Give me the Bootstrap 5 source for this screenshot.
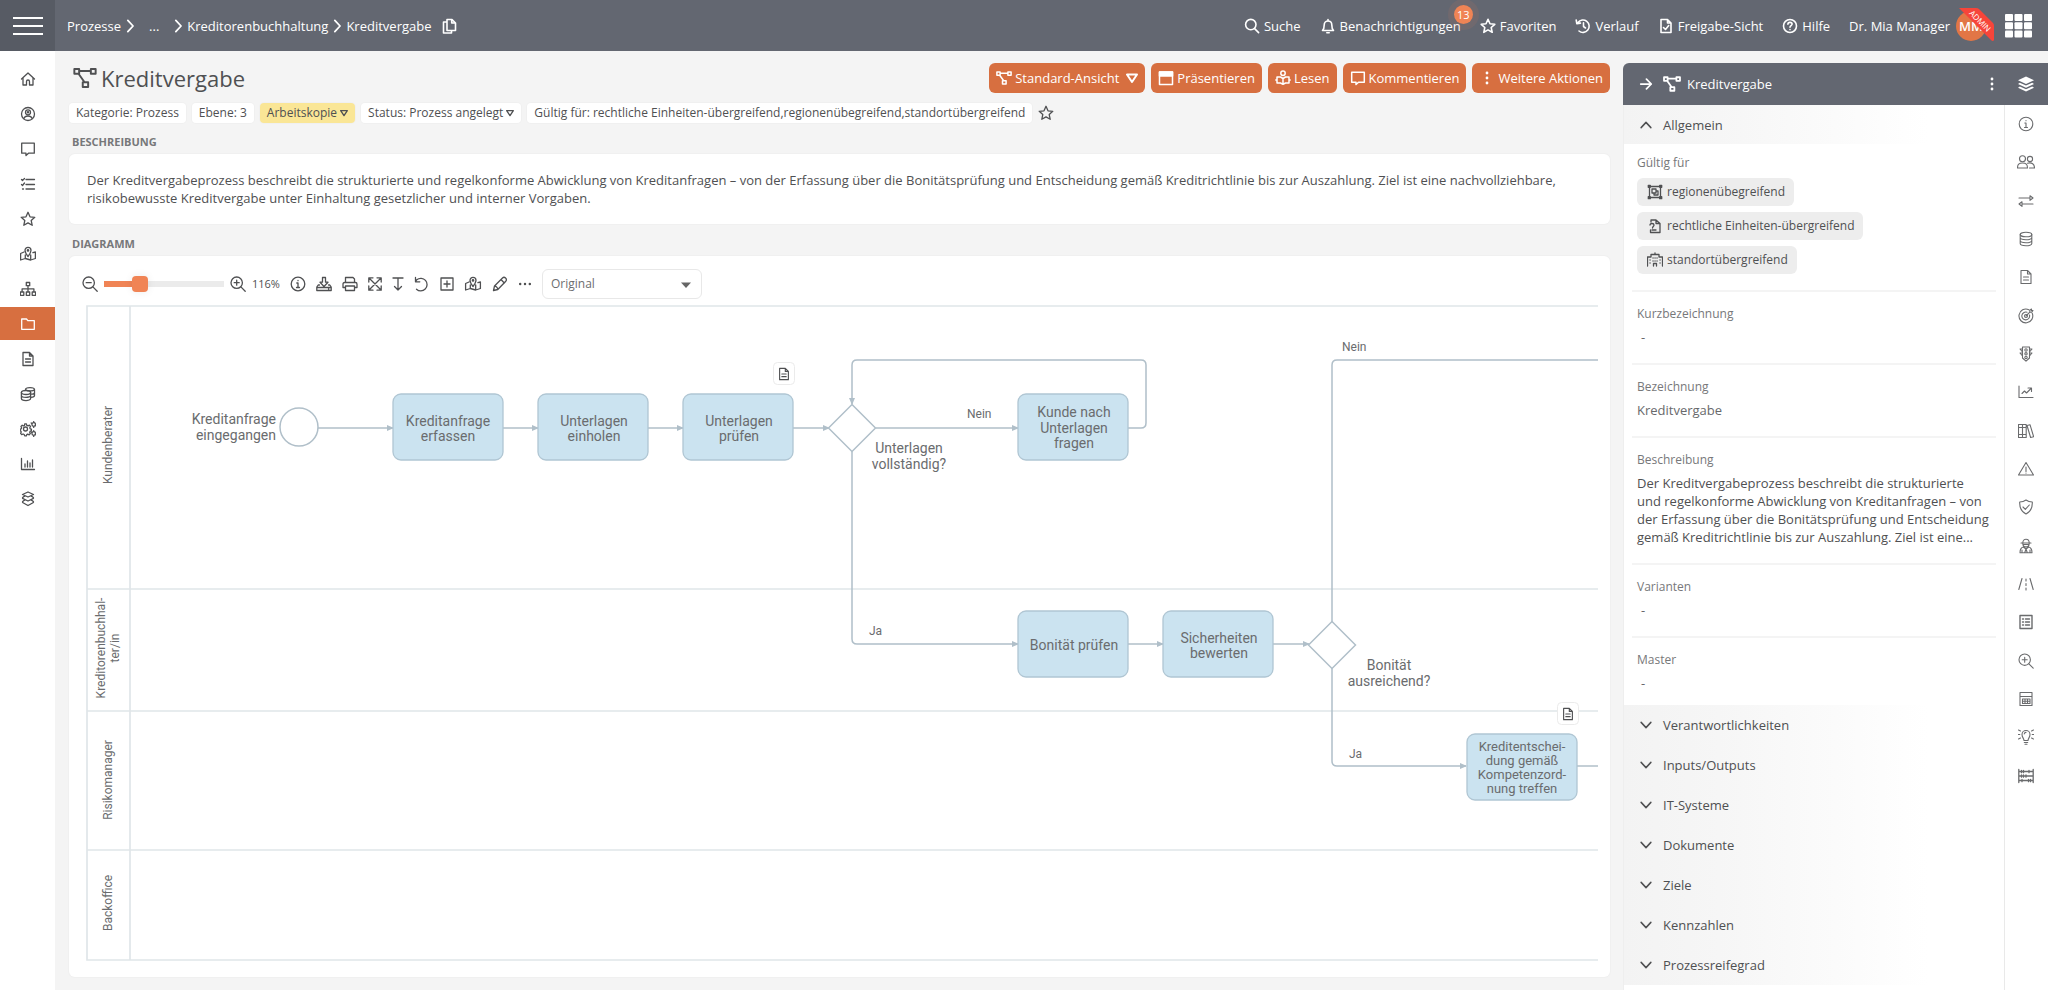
<!DOCTYPE html>
<html lang="de">
<head>
<meta charset="utf-8">
<meta name="viewport" content="width=device-width, initial-scale=1">
<title>Kreditvergabe</title>
<link href="https://cdn.jsdelivr.net/npm/bootstrap@5.3.0/dist/css/bootstrap.min.css" rel="stylesheet">
<style>
:root{--slate:#636771;--slate-dark:#575b64;--accent:#d76f40;--accent-light:#f08455;--ink:#4f5052;--muted:#77787a;--page:#f4f4f4;--rule:#eeeeee}
body{font-family:"Open Sans",sans-serif;font-size:13px;line-height:18px;color:var(--ink);background:var(--page)}
a{color:inherit;text-decoration:none}
.app{min-height:100vh}
.ico{width:16px;height:16px;flex:none;fill:none;stroke:currentColor;stroke-width:1.3;stroke-linecap:round;stroke-linejoin:round;overflow:visible}
.ico-title{width:24px;height:24px}
.ico-wide{width:18px}
.ico-slim{width:14px}
.ico-thin{width:12px}
.plain{border:0;background:none;padding:0;color:inherit;line-height:18px}
.topbar{height:51px;background:var(--slate);color:#fff}
.topbar .ico{stroke-width:1.6}
.burger{width:55px;background:var(--slate-dark);gap:6px}
.burger span{display:block;width:30px;height:2px;background:#fff}
.crumbs{padding-left:12px;gap:2px}
.crumbs .sep{width:14px;height:14px;stroke-width:2}
.crumbs .more{margin:0 10px}
.topnav{gap:19px}
.topnav a{gap:4px}
.topbar .apps{width:27px;height:24px}
.count{top:-12px;right:-12px;width:19px;height:19px;line-height:19px;border-radius:50%;background:var(--accent-light);color:#fff;font-size:11px;text-align:center;box-shadow:0 0 0 6px rgba(240,132,85,.1)}
.avatar{width:30px;height:30px;margin-left:2px;border-radius:50%;background:#e27646;font-weight:600}
.ribbon{top:-3px;left:2px;width:36px;height:36px;overflow:visible;fill:#f6453a}
.ribbon text{fill:#fff;font-size:8px;font-weight:400}
.side{width:55px;background:#fff;padding-top:11px;gap:2px}
.side a{height:33px}
.side a.active{background:var(--accent);color:#fff}
.main-col{min-width:0;padding:12px 13px 13px 14px}
h1{font-size:22px;line-height:30px;font-weight:400;margin:0;color:var(--ink)}
.acts,.tags{gap:6px}
.tags{margin:10px 0 11px}
.act{height:30px;background:var(--accent);color:#fff;border:0;border-radius:6px;font-size:13px;line-height:18px;padding:0 7px;gap:3px}
.act:hover{background:#c66236;color:#fff}
.act .ico{stroke-width:1.5}
.act .open-mark{width:12px;height:12px;stroke-width:2;margin-left:4px}
.tag{height:20px;background:#fff;border:0;border-radius:4px;font-size:12px;line-height:20px;padding:0 7px;color:var(--ink);box-shadow:0 0 0 1px #f0f0f0}
.tag .ico{width:8px;height:8px;stroke-width:2;margin-left:3px}
.tag-warn{background:#fae696}
h2.cap{font-size:11px;line-height:16px;font-weight:700;color:var(--muted);margin:0 0 4px 3px}
.panel{background:#fff;border-radius:6px;box-shadow:0 0 0 1px #f0f0f0}
.desc{padding:17px 18px;margin-bottom:12px}
.diagram{padding:13px 12px 0 13px}
.toolbar{height:30px;gap:10px}
.zoom-group{gap:6px}
.zoom-value{font-size:11px}
.zoomer{-webkit-appearance:none;appearance:none;width:120px;height:6px;margin:0;background:linear-gradient(90deg,var(--accent-light) 30%,#ebebeb 30%)}
.zoomer::-webkit-slider-thumb{-webkit-appearance:none;width:16px;height:16px;border-radius:4px;background:var(--accent-light);box-shadow:0 0 8px rgba(0,0,0,.08)}
.view-pick{width:160px}
.view-pick select{-webkit-appearance:none;appearance:none;width:100%;height:30px;border:1px solid #e8e8e8;border-radius:6px;background:#fff;color:#6c6d6f;font-size:12px;line-height:18px;padding:0 8px}
.view-pick .ico{position:absolute;right:10px;top:10px;width:12px;height:12px;fill:#666;stroke:none;pointer-events:none}
.canvas{height:658px;margin-top:6px}
.flowchart{display:block;width:100%;height:658px;font-family:Roboto,sans-serif}
.lanes{stroke:#e0e6e9;stroke-width:1.7;fill:none}
.edges{stroke:#b0bfc9;stroke-width:1.5;fill:none}
.edges path{marker-end:url(#tip)}
.edges .open{marker-end:none}
.tasks rect{fill:#cbe3f0;stroke:#b0c6d3;stroke-width:1.3}
.events{fill:#fff;stroke:#b0bfc9;stroke-width:1.5}
.t14{font-size:14px;fill:#6a6c6e}.t13{font-size:13px;fill:#6a6c6e}.t12{font-size:12px;fill:#6a6c6e}
.mid{text-anchor:middle}.end{text-anchor:end}
.note rect{fill:#fff;stroke:#ebebeb}
.note .ico{width:14px;height:14px}
.aside{width:425px;padding-top:12px}
.aside-head{height:42px;background:var(--slate);color:#fff;border-radius:6px 0 0 0;padding:0 14px 0 16px}
.aside-head .go{width:14px;height:14px;stroke-width:2}
.aside-head .kind{width:22px;height:18px;stroke-width:1.6}
.aside-head .opts{margin-right:18px}
.aside-body{background:#fff;border-left:1px solid var(--rule)}
.fold{height:40px;padding-left:16px;gap:11px;background:linear-gradient(90deg,#f3f3f3 0,#f6f6f6 25%,#fff 80%);color:var(--ink);text-align:left}
.fold-open{height:39px}
.fold .ico{width:12px;height:12px;stroke-width:2}
.fields{padding:0 8px}
.field{border-top:2px solid #f4f4f4;padding:13px 0 0 5px;min-height:73px}
.field.tall{min-height:127px}
.field.final{min-height:69px}
.field dt{font-size:12px;line-height:18px;font-weight:400;color:var(--muted);margin-bottom:5px}
.field dd{margin:0;color:#68696b}
.field.tall dd{color:var(--ink)}
.valid{padding:10px 5px 16px}
.valid h3{font-size:12px;line-height:18px;font-weight:400;color:var(--muted);margin:0 0 6px}
.chips{gap:6px}
.chip{height:28px;background:#ededed;border-radius:6px;padding:0 9px 0 10px;gap:4px;font-size:12px;color:var(--ink)}
.rail{width:44px;border-left:1px solid #e9e9e9;background:#fff}
.rail-list{height:690px;padding-right:1px;color:#6a6b6d}
.rail .ico{stroke-width:1.1}
</style>
</head>
<body>
<svg class="d-none" xmlns="http://www.w3.org/2000/svg">
<symbol id="home" viewBox="0 0 16 16"><path d="M1.5 8 8 2l6.500 6M3 7v7h3.500V10.500a1.500 1.500 0 0 1 3 0V14H13V7"/></symbol>
<symbol id="user" viewBox="0 0 16 16"><circle cx="8" cy="8" r="6.500"/><circle cx="8" cy="6.300" r="2.500"/><circle cx="8" cy="6.300" r=".6"/><path d="M3.800 12.500c.8-2 2.300-2.500 4.200-2.500s3.400.5 4.200 2.500"/></symbol>
<symbol id="comment" viewBox="0 0 16 16"><path d="M1.700 2.200h12.600v10H8.500L6 14.500v-2.300H1.700z"/></symbol>
<symbol id="tasks" viewBox="0 0 16 16"><path d="M6 3.500h8.500M6 8.500h8.500M6 13h8.500M1.500 3.500l1 1L4.500 2.500M1.500 8.500l1 1L4.500 7M2.500 13h1"/></symbol>
<symbol id="star" viewBox="0 0 16 16"><path d="m8 1.300 2 4.500 4.800.5-3.600 3.200 1 4.800L8 11.900l-4.200 2.400 1-4.800L1.200 6.300l4.800-.5z"/></symbol>
<symbol id="map" viewBox="0 0 16 16"><path d="M8 10.500C6 7.800 5 6.500 5 4.300a3 3 0 0 1 6 0C11 6.500 10 7.800 8 10.500zM4 6 .6 7.500V14l4.700-1.500 5.400 1.500 4.700-1.500V6l-2.500.7M5.300 9v3.500M10.700 9v5"/><circle cx="8" cy="4.400" r=".7"/></symbol>
<symbol id="sitemap" viewBox="0 0 16 16"><path d="M6.300 1.500h3.400v3.200H6.300zM.4 11h3.400v3.300H.4zM6.300 11h3.400v3.300H6.300zM12.200 11h3.400v3.300h-3.400zM8 4.700V11M2.100 11V7.800h11.800V11"/></symbol>
<symbol id="folder" viewBox="0 0 16 16"><path d="M1.700 3h4.800l1.300 1.700h6.500v8.600H1.700z"/></symbol>
<symbol id="doc" viewBox="0 0 16 16"><path d="M3 1.500h6.500L13 5v9.500H3zM9.500 1.500V5H13M5.500 8h5M5.500 11h5"/></symbol>
<symbol id="dbstack" viewBox="0 0 16 16"><ellipse cx="6" cy="6.500" rx="4.600" ry="2"/><path d="M1.400 6.500v6c0 2.700 9.200 2.700 9.200 0v-6M1.400 9.500c0 2.500 9.200 2.500 9.200 0M5.500 3.500c0-2.600 9-2.600 9 0v6c0 1-1.500 1.700-3.500 1.800M5.500 3.500c.5 1.500 8 2.200 9 0M10.600 8.200c2 0 3.900-.7 3.900-1.700"/></symbol>
<symbol id="gears" viewBox="0 0 16 16"><circle cx="5.500" cy="8" r="2"/><path d="M4.700 2.800h1.600l.5 1.500 1.200.5 1.400-.6 1.100 1.200-.7 1.400.4 1 1.200.4v1.600l-1.200.4-.5 1.100.6 1.300-1.100 1.200-1.500-.7-.9.500-.5 1.300H4.700l-.5-1.400-1.100-.5-1.400.6-1.100-1.200.6-1.300-.4-1L.2 9.700V8.200l1-.4.4-1.100-.6-1.300 1.200-1.200 1.300.7 1-.4z"/><circle cx="13.700" cy="3.500" r="1.800"/><circle cx="13.700" cy="12.500" r="1.800"/><path d="M13.700.6v.6M13.700 5.800v.6M11.200 2l.4.300M15.800 4.800l.4.300M13.700 9.600v.6M13.700 14.800v.6M11.200 11l.4.300M15.800 13.800l.4.300"/></symbol>
<symbol id="bars" viewBox="0 0 16 16"><path d="M1.500 2.500v11h13M5 11V8M7.500 11V5M10 11V7M12.500 11V4"/></symbol>
<symbol id="layers" viewBox="0 0 16 16"><path d="m8 1 5.500 2.500L8 6 2.500 3.500zM4.800 5.200C3 6 1.800 7 3 7.700L8 10l5-2.300c1.200-.7 0-1.700-1.800-2.500M4.800 9.200C3 10 1.800 11 3 11.700L8 14.500l5-2.800c1.200-.7 0-1.700-1.800-2.500"/></symbol>
<symbol id="layersfill" viewBox="0 0 16 16"><path fill="currentColor" stroke="none" d="m8 .5 8 3.800-8 3.800-8-3.800zM1.800 6.800 8 9.600l6.200-2.800L16 8l-8 3.800L0 8zM1.800 10.500 8 13.300l6.200-2.800L16 11.700l-8 3.800-8-3.800z"/></symbol>
<symbol id="search" viewBox="0 0 16 16"><circle cx="6.800" cy="6.600" r="5.200"/><path d="m10.600 10.600 4 4"/></symbol>
<symbol id="bell" viewBox="0 0 16 16"><path d="M2.500 12.500c1.300-1.300 1.700-2.500 1.700-5.500C4.200 4.500 6 3 8 3s3.800 1.500 3.800 4c0 3 .4 4.200 1.700 5.500zM8 3V1.500M6.800 14.700h2.400"/></symbol>
<symbol id="history" viewBox="0 0 16 16"><path d="M4 13a6.200 6.200 0 1 0-1-8.500M1.200 2l.6 3.600 3.700-.5M8.500 4.800V8.500l2 1.500"/></symbol>
<symbol id="doccheck" viewBox="0 0 16 16"><path d="M3 1.500h6.500L13 5v9.500H3zM9.500 1.500V5H13M5.500 9.500l2 2 3.200-4"/></symbol>
<symbol id="help" viewBox="0 0 16 16"><circle cx="8" cy="8" r="6.500"/><path d="M5.900 6.300c0-2.700 4.200-2.500 4.200-.2C10.100 7.600 8 7.600 8 9.300M8 11.500v.1"/></symbol>
<symbol id="appgrid" viewBox="0 0 27 24"><g fill="#fff" stroke="none"><rect width="8" height="7" rx="1"/><rect x="9.500" width="8" height="7" rx="1"/><rect x="19" width="8" height="7" rx="1"/><rect y="8.300" width="8" height="7" rx="1"/><rect x="9.500" y="8.300" width="8" height="7" rx="1"/><rect x="19" y="8.300" width="8" height="7" rx="1"/><rect y="16.600" width="8" height="7" rx="1"/><rect x="9.500" y="16.600" width="8" height="7" rx="1"/><rect x="19" y="16.600" width="8" height="7" rx="1"/></g></symbol>
<symbol id="flow" viewBox="0 0 16 16"><path d="M.9 2h3.200v3.200H.9zM11.900 2h3.200v3.200h-3.200zM6.500 10.800h3.600V14H6.500zM4.100 3.300h7.800M3.700 5.200l4 5.600"/></symbol>
<symbol id="window" viewBox="0 0 16 16"><path d="M1.500 2h13v12.500h-13z"/><path fill="currentColor" d="M1.500 2h13v4h-13z"/></symbol>
<symbol id="reader" viewBox="0 0 16 16"><circle cx="8" cy="3.200" r="2.200"/><path d="M8 8.500 5.500 7H2v6h3.500L8 14.300l2.500-1.300H14V7h-3.500zM8 8.500v5.800M2 10H.8M15.200 10H14"/></symbol>
<symbol id="dotsv" viewBox="0 0 16 16"><path stroke-width="2.800" d="M8 3v.01M8 8v.01M8 13v.01"/></symbol>
<symbol id="dotsh" viewBox="0 0 16 16"><path stroke-width="2.800" d="M2.500 8h.01M8 8h.01M13.500 8h.01"/></symbol>
<symbol id="tri" viewBox="0 0 12 12"><path d="M1 2.500h10L6 10z"/></symbol>
<symbol id="caret" viewBox="0 0 12 12"><path d="M1 3.500h10L6 9z"/></symbol>
<symbol id="right" viewBox="0 0 16 16"><path d="m5.500 1.500 6 6.500-6 6.500"/></symbol>
<symbol id="up" viewBox="0 0 16 16"><path d="m1.500 11.500 6.500-7 6.500 7"/></symbol>
<symbol id="down" viewBox="0 0 16 16"><path d="m1.500 4.500 6.500 7 6.500-7"/></symbol>
<symbol id="copy" viewBox="0 0 16 16"><path d="M6 1.500h5L14.500 5v7.500H6zM10.700 1.500V5h3.800M6 4H2.500v11h8v-2.500"/></symbol>
<symbol id="arrow" viewBox="0 0 16 16"><path d="M2 8h12M8.500 2.500 14 8l-5.500 5.500"/></symbol>
<symbol id="region" viewBox="0 0 16 16"><path d="M2.500 2.500h11v11h-11zM5 5h4v4H5zM7 9v2h4V7H9M1.300 1.300h2v2h-2zM12.700 1.300h2v2h-2zM1.300 12.700h2v2h-2zM12.700 12.700h2v2h-2z"/></symbol>
<symbol id="legal" viewBox="0 0 16 16"><path d="M4 2h5l4 3.500V14.500H3.500V12M9 2v3.500h4M4 2v2M3 7c0-2 4-2 4 0 0 1.500-1.500 1.500-1.500 3M5 12h4"/></symbol>
<symbol id="office" viewBox="0 0 16 16"><path d="M.5 14V5H4V2.500h8V5h3.500v9M6.500 14v-2.500h3V14M8 2.500V1M3 8h.1M3 11h.1M6 6h.1M6 9h.1M8 6h.1M8 9h.1M10 6h.1M10 9h.1M13 8h.1M13 11h.1"/></symbol>
<symbol id="info" viewBox="0 0 16 16"><circle cx="8" cy="8" r="6.800"/><path d="M6.800 7H8v4.500M6.500 11.500h3M8 4.500v.2"/></symbol>
<symbol id="users" viewBox="0 0 18 16"><circle cx="5.500" cy="4.800" r="3"/><circle cx="13" cy="5" r="2.600"/><path d="M.5 14c0-3.500 1.500-5 5-5s5 1.500 5 5zM10.500 9.200c4.500-1 7 .8 7 4.800h-5"/></symbol>
<symbol id="exchange" viewBox="0 0 16 16"><path d="M1 5h11M12 2.700 15 5l-3 2.300zM15 11H4M4 8.700 1 11l3 2.300z"/></symbol>
<symbol id="db" viewBox="0 0 16 16"><ellipse cx="8" cy="3.500" rx="5.800" ry="2.300"/><path d="M2.200 3.500v9c0 3 11.600 3 11.600 0v-9M2.200 6.500c0 3 11.600 3 11.600 0M2.200 9.500c0 3 11.600 3 11.600 0"/></symbol>
<symbol id="target" viewBox="0 0 16 16"><path d="M14.200 5.200A6.900 6.900 0 1 1 10.800 1.700M11.500 7A3.900 3.900 0 1 1 9 4.300M8 8l3.800-3.800M11.800 4.200V2.300L13.500 1v1.500H15l-1.300 1.700z"/><circle cx="8" cy="8" r="1.500"/></symbol>
<symbol id="traffic" viewBox="0 0 16 16"><path d="M4.500 1h7v11L8 15.200 4.500 12zM4.500 3H2l2.500 3M4.500 7H2l2.500 3M11.500 3H14l-2.500 3M11.500 7H14l-2.500 3"/><circle cx="8" cy="4" r="1.200"/><circle cx="8" cy="7.800" r="1.200"/><circle cx="8" cy="11.400" r="1.200"/></symbol>
<symbol id="trend" viewBox="0 0 16 16"><path d="M1 2v11.500h14M4 9.500 6.500 7l2 2L13 4.500M10 4h3.500v3.500"/></symbol>
<symbol id="books" viewBox="0 0 16 16"><path d="M.5 1.500h4v13h-4zM4.500 1.500h3.700v13H4.500zM.5 4.500h7.700M.5 11.500h7.700M9 2.500l3-.8 3.600 12-3 .8z"/></symbol>
<symbol id="warn" viewBox="0 0 16 16"><path d="M8 1.500 15.500 14H.5zM8 6v4.500M8 12v.1"/></symbol>
<symbol id="shield" viewBox="0 0 16 16"><path d="M8 1c2 1.500 4 2 6.300 2 .3 6-1.300 9.500-6.300 12C3 12.500 1.400 9 1.700 3 4 3 6 2.500 8 1zM5 8l2.300 2.300L11.300 6"/></symbol>
<symbol id="spy" viewBox="0 0 16 16"><path d="M3 5h10M4.800 5c0-5 6.400-5 6.400 0M4.800 5.500c0 4.500 6.400 4.500 6.400 0M2 14.800c0-4 1-5.300 3.300-5.800L8 11l2.700-2c2.300.5 3.300 1.800 3.300 5.800zM8 11l-1.300 3.800M8 11l1.300 3.800M5.500 6.500h5M4 12v2.800M12 12v2.800"/></symbol>
<symbol id="road" viewBox="0 0 16 16"><path d="M4 2.500.8 13.500M12 2.500l3.200 11M8 3v2M8 7.500v2M8 12v2"/></symbol>
<symbol id="list" viewBox="0 0 16 16"><path d="M2 1.500h12v13H2zM4.500 5h1M7.500 5h4M4.500 8h1M7.500 8h4M4.500 11h1M7.500 11h4" stroke-width="1.400"/></symbol>
<symbol id="zoomin" viewBox="0 0 16 16"><circle cx="6.700" cy="6.700" r="5.700"/><path d="m10.900 10.900 4.300 4.300M4.200 6.700h5M6.700 4.200v5"/></symbol>
<symbol id="zoomout" viewBox="0 0 16 16"><circle cx="6.700" cy="6.700" r="5.700"/><path d="m10.900 10.900 4.300 4.300M4.200 6.700h5"/></symbol>
<symbol id="calc" viewBox="0 0 16 16"><path d="M2 1.500h12v13H2zM2 5.500h12M4.500 8h7.500v4.500H4.500zM7 8v4.500M9.500 8v4.500M4.500 10.200H12"/></symbol>
<symbol id="bulb" viewBox="0 0 16 16"><path d="M6 11.500C6 9.500 4 8.500 4 5.500a4 4 0 0 1 8 0c0 3-2 4-2 6zM6.300 13.500h3.400M7 15.200h2M6.200 5c.2-1 .8-1.500 1.800-1.600M1.800 5.500H-.5M2.500 2 .5 1M2.500 9l-2 1M14.200 5.500h2.300M13.500 2l2-1M13.500 9l2 1"/></symbol>
<symbol id="abacus" viewBox="0 0 16 16"><path d="M.8 1.500v13M15.200 1.500v13M.8 3.500h14.400M.8 8h14.400M.8 12.500h14.400M3.500 2.300v2.400M5.500 2.300v2.400M11 2.300v2.400M3.500 6.800v2.400M5.500 6.800v2.400M8 6.800v2.400M4 11.300v2.400M10.500 11.300v2.400M12.500 11.300v2.400" stroke-width="1.300"/></symbol>
<symbol id="save" viewBox="0 0 16 16"><path d="M6.500 1.500h3v4.700H12L8 10.500 4 6.200h2.500zM3.500 9H2.200L.8 11v3.500h14.400V11l-1.400-2h-1.300M.8 11.500h14.400M12.500 13h.3"/></symbol>
<symbol id="print" viewBox="0 0 16 16"><path d="M3.500 6.500V1.500h7.500l1.500 1.500v3.500M3.500 11.500H1V8.200C1 7 1.500 6.500 2.500 6.500h11c1 0 1.500.5 1.500 1.700v3.300h-2.500M3.500 10h9v4.500h-9z"/></symbol>
<symbol id="expand" viewBox="1 1 14 14"><path d="m2 2 12 12M14 2 2 14M1.800 6V1.800H6M10 1.800h4.200V6M1.800 10v4.200H6M10 14.200h4.200V10"/></symbol>
<symbol id="drop" viewBox="2 1 12 14"><path d="M3 2h10M8 2v12M4.500 10.500 8 14l3.500-3.500"/></symbol>
<symbol id="undo" viewBox="0 0 16 16"><path d="M2.500 13.200a6.300 6.300 0 1 0 .3-9.500L1.700 5.500M1.500 1.500v4.300h4.300"/></symbol>
<symbol id="plus" viewBox="1 1 14 14"><path d="M2 2h12v12H2zM8 5v6M5 8h6"/></symbol>
<symbol id="pencil" viewBox="0 0 16 16"><path d="m1.500 14.500 1-4.500 8-8c2-2 5 1 3.300 3.200L5.800 13.500zM2.500 10c1.500 0 3.300 1.800 3.300 3.500M9 3.500 12.300 7"/></symbol>
</svg>

<div class="app d-flex flex-column">
<header class="topbar d-flex align-items-stretch">
  <button class="plain burger d-flex flex-column align-items-center justify-content-center" aria-label="Menü"><span></span><span></span><span></span></button>
  <nav class="crumbs d-flex align-items-center" aria-label="Pfad">
    <a href="#">Prozesse</a><svg class="ico sep"><use href="#right"/></svg>
    <a href="#" class="more">...</a><svg class="ico sep"><use href="#right"/></svg>
    <a href="#">Kreditorenbuchhaltung</a><svg class="ico sep"><use href="#right"/></svg>
    <a href="#">Kreditvergabe</a>
    <button class="plain d-flex ms-2" aria-label="Kopieren"><svg class="ico"><use href="#copy"/></svg></button>
  </nav>
  <nav class="topnav d-flex align-items-center ms-auto" aria-label="Werkzeuge">
    <a href="#" class="d-flex align-items-center"><svg class="ico"><use href="#search"/></svg>Suche</a>
    <a href="#" class="d-flex align-items-center position-relative"><svg class="ico"><use href="#bell"/></svg>Benachrichtigungen<span class="count position-absolute">13</span></a>
    <a href="#" class="d-flex align-items-center"><svg class="ico"><use href="#star"/></svg>Favoriten</a>
    <a href="#" class="d-flex align-items-center"><svg class="ico"><use href="#history"/></svg>Verlauf</a>
    <a href="#" class="d-flex align-items-center"><svg class="ico"><use href="#doccheck"/></svg>Freigabe-Sicht</a>
    <a href="#" class="d-flex align-items-center"><svg class="ico"><use href="#help"/></svg>Hilfe</a>
    <a href="#" class="d-flex align-items-center">Dr. Mia Manager<span class="avatar position-relative d-flex align-items-center justify-content-center">MM<svg class="ribbon position-absolute" viewBox="0 0 36 36"><path d="M1 0h17q2 0 3 1l14 14q1 1 1 3v14q-1 2-3 0z"/><text text-anchor="middle" transform="translate(20 15) rotate(45)">ADMIN</text></svg></span></a>
    <button class="plain d-flex me-3" aria-label="Apps"><svg class="ico apps"><use href="#appgrid"/></svg></button>
  </nav>
</header>

<div class="d-flex flex-grow-1">
<nav class="side d-flex flex-column flex-shrink-0" aria-label="Hauptmenü">
  <a href="#" class="d-flex align-items-center justify-content-center" aria-label="Start"><svg class="ico"><use href="#home"/></svg></a>
  <a href="#" class="d-flex align-items-center justify-content-center" aria-label="Profil"><svg class="ico"><use href="#user"/></svg></a>
  <a href="#" class="d-flex align-items-center justify-content-center" aria-label="Kommentare"><svg class="ico"><use href="#comment"/></svg></a>
  <a href="#" class="d-flex align-items-center justify-content-center" aria-label="Aufgaben"><svg class="ico"><use href="#tasks"/></svg></a>
  <a href="#" class="d-flex align-items-center justify-content-center" aria-label="Favoriten"><svg class="ico"><use href="#star"/></svg></a>
  <a href="#" class="d-flex align-items-center justify-content-center" aria-label="Landkarte"><svg class="ico"><use href="#map"/></svg></a>
  <a href="#" class="d-flex align-items-center justify-content-center" aria-label="Organisation"><svg class="ico"><use href="#sitemap"/></svg></a>
  <a href="#" class="active d-flex align-items-center justify-content-center" aria-label="Prozesse"><svg class="ico"><use href="#folder"/></svg></a>
  <a href="#" class="d-flex align-items-center justify-content-center" aria-label="Dokumente"><svg class="ico"><use href="#doc"/></svg></a>
  <a href="#" class="d-flex align-items-center justify-content-center" aria-label="Systeme"><svg class="ico"><use href="#dbstack"/></svg></a>
  <a href="#" class="d-flex align-items-center justify-content-center" aria-label="Einstellungen"><svg class="ico"><use href="#gears"/></svg></a>
  <a href="#" class="d-flex align-items-center justify-content-center" aria-label="Berichte"><svg class="ico"><use href="#bars"/></svg></a>
  <a href="#" class="d-flex align-items-center justify-content-center" aria-label="Ebenen"><svg class="ico"><use href="#layers"/></svg></a>
</nav>

<main class="main-col d-flex flex-column flex-grow-1">
  <div class="d-flex align-items-center">
    <svg class="ico ico-title ms-1 me-1"><use href="#flow"/></svg>
    <h1>Kreditvergabe</h1>
    <div class="acts d-flex ms-auto">
      <button class="btn act d-flex align-items-center"><svg class="ico"><use href="#flow"/></svg>Standard-Ansicht<svg class="ico open-mark"><use href="#tri"/></svg></button>
      <button class="btn act d-flex align-items-center"><svg class="ico"><use href="#window"/></svg>Präsentieren</button>
      <button class="btn act d-flex align-items-center"><svg class="ico"><use href="#reader"/></svg>Lesen</button>
      <button class="btn act d-flex align-items-center"><svg class="ico"><use href="#comment"/></svg>Kommentieren</button>
      <button class="btn act d-flex align-items-center"><svg class="ico"><use href="#dotsv"/></svg>Weitere Aktionen</button>
    </div>
  </div>
  <div class="tags d-flex align-items-center">
    <span class="tag">Kategorie: Prozess</span>
    <span class="tag">Ebene: 3</span>
    <button class="tag tag-warn d-flex align-items-center">Arbeitskopie<svg class="ico"><use href="#tri"/></svg></button>
    <button class="tag d-flex align-items-center">Status: Prozess angelegt<svg class="ico"><use href="#tri"/></svg></button>
    <span class="tag">Gültig für: rechtliche Einheiten-übergreifend,regionenübegreifend,standortübergreifend</span>
    <button class="plain d-flex" aria-label="Favorit"><svg class="ico"><use href="#star"/></svg></button>
  </div>
  <h2 class="cap">BESCHREIBUNG</h2>
  <section class="panel desc">Der Kreditvergabeprozess beschreibt die strukturierte und regelkonforme Abwicklung von Kreditanfragen – von der Erfassung über die Bonitätsprüfung und Entscheidung gemäß Kreditrichtlinie bis zur Auszahlung. Ziel ist eine nachvollziehbare, risikobewusste Kreditvergabe unter Einhaltung gesetzlicher und interner Vorgaben.</section>
  <h2 class="cap">DIAGRAMM</h2>
  <section class="panel diagram flex-grow-1">
    <div class="toolbar d-flex align-items-center">
      <div class="zoom-group d-flex align-items-center">
        <button class="plain d-flex" aria-label="Verkleinern"><svg class="ico"><use href="#zoomout"/></svg></button>
        <input class="zoomer" type="range" min="0" max="100" value="27" aria-label="Zoom">
        <button class="plain d-flex" aria-label="Vergrößern"><svg class="ico"><use href="#zoomin"/></svg></button>
        <span class="zoom-value">116%</span>
      </div>
      <button class="plain d-flex" aria-label="Info"><svg class="ico"><use href="#info"/></svg></button>
      <button class="plain d-flex" aria-label="Speichern"><svg class="ico"><use href="#save"/></svg></button>
      <button class="plain d-flex" aria-label="Drucken"><svg class="ico"><use href="#print"/></svg></button>
      <button class="plain d-flex" aria-label="Einpassen"><svg class="ico ico-slim"><use href="#expand"/></svg></button>
      <button class="plain d-flex" aria-label="Höhe anpassen"><svg class="ico ico-thin"><use href="#drop"/></svg></button>
      <button class="plain d-flex" aria-label="Zurücksetzen"><svg class="ico"><use href="#undo"/></svg></button>
      <button class="plain d-flex" aria-label="Hinzufügen"><svg class="ico ico-slim"><use href="#plus"/></svg></button>
      <button class="plain d-flex" aria-label="Karte"><svg class="ico ico-wide"><use href="#map"/></svg></button>
      <button class="plain d-flex" aria-label="Bearbeiten"><svg class="ico"><use href="#pencil"/></svg></button>
      <button class="plain d-flex" aria-label="Mehr"><svg class="ico ico-slim"><use href="#dotsh"/></svg></button>
      <div class="view-pick position-relative"><select aria-label="Ansicht"><option>Original</option></select><svg class="ico"><use href="#caret"/></svg></div>
    </div>
    <div class="canvas overflow-hidden ps-1">
    <svg class="flowchart" role="img" aria-label="Prozessdiagramm">
      <defs><marker id="tip" viewBox="0 0 7 6" markerUnits="userSpaceOnUse" markerWidth="7" markerHeight="6" refX="6" refY="3" orient="auto"><path d="M0 0 7 3 0 6z" fill="#b0bfc9"/></marker></defs>
      <path class="lanes" d="M3000 1H1V655H3000M44 1V655M1 284H3000M1 406H3000M1 545H3000"/>
      <g class="edges">
        <path d="M232 123H307"/><path d="M417 123H452"/><path d="M562 123H597"/><path d="M707 123H743"/>
        <path d="M790 123H932"/>
        <path d="M1042 123H1055Q1060 123 1060 118V60Q1060 55 1055 55H771Q766 55 766 60V99"/>
        <path d="M766 146V334Q766 339 771 339H932"/>
        <path d="M1042 339H1077"/><path d="M1187 339H1223"/>
        <path class="open" d="M1246 317V60Q1246 55 1251 55H3000"/>
        <path d="M1246 363V456Q1246 461 1251 461H1380"/>
        <path class="open" d="M1491 461H3000"/>
      </g>
      <g class="events"><circle cx="213" cy="122" r="19"/><path d="m766 99.500 23.500 23.500-23.500 23.500-23.500-23.500zM1246 316.500l23.500 23.500-23.500 23.500-23.500-23.500z"/></g>
      <g class="tasks">
        <rect x="307" y="89" width="110" height="66" rx="8"/><rect x="452" y="89" width="110" height="66" rx="8"/><rect x="597" y="89" width="110" height="66" rx="8"/><rect x="932" y="89" width="110" height="66" rx="8"/>
        <rect x="932" y="306" width="110" height="66" rx="8"/><rect x="1077" y="306" width="110" height="66" rx="8"/><rect x="1381" y="429" width="110" height="66" rx="8"/>
      </g>
      <g class="t14 end"><text x="190" y="119">Kreditanfrage</text><text x="190" y="135">eingegangen</text></g>
      <g class="t14 mid">
        <text x="362" y="121">Kreditanfrage</text><text x="362" y="136">erfassen</text>
        <text x="508" y="121">Unterlagen</text><text x="508" y="136">einholen</text>
        <text x="653" y="121">Unterlagen</text><text x="653" y="136">prüfen</text>
        <text x="823" y="148">Unterlagen</text><text x="823" y="164">vollständig?</text>
        <text x="988" y="112">Kunde nach</text><text x="988" y="128">Unterlagen</text><text x="988" y="143">fragen</text>
        <text x="988" y="345">Bonität prüfen</text>
        <text x="1133" y="338">Sicherheiten</text><text x="1133" y="353">bewerten</text>
        <text x="1303" y="365">Bonität</text><text x="1303" y="381">ausreichend?</text>
      </g>
      <g class="t13 mid"><text x="1436" y="446">Kreditentschei-</text><text x="1436" y="460">dung gemäß</text><text x="1436" y="474">Kompetenzord-</text><text x="1436" y="488">nung treffen</text></g>
      <g class="t12"><text x="881" y="113">Nein</text><text x="783" y="330">Ja</text><text x="1256" y="46">Nein</text><text x="1263" y="453">Ja</text></g>
      <g class="t12 mid">
        <text transform="translate(26 140) rotate(-90)">Kundenberater</text>
        <text transform="translate(19 343) rotate(-90)">Kreditorenbuchhal-</text><text transform="translate(33 343) rotate(-90)">ter/in</text>
        <text transform="translate(26 475) rotate(-90)">Risikomanager</text>
        <text transform="translate(26 598) rotate(-90)">Backoffice</text>
      </g>
      <g class="note"><rect x="687.500" y="57.500" width="21" height="22" rx="4"/><svg class="ico" x="691" y="62" width="14" height="14"><use href="#doc"/></svg>
      <rect x="1471.500" y="397.500" width="21" height="22" rx="4"/><svg class="ico" x="1475" y="402" width="14" height="14"><use href="#doc"/></svg></g>
    </svg>
    </div>
  </section>
</main>

<aside class="aside d-flex flex-column flex-shrink-0">
  <div class="aside-head d-flex align-items-center">
    <button class="plain d-flex" aria-label="Einklappen"><svg class="ico go"><use href="#arrow"/></svg></button>
    <svg class="ico kind ms-2 me-1"><use href="#flow"/></svg>
    <span>Kreditvergabe</span>
    <button class="plain opts d-flex ms-auto" aria-label="Optionen"><svg class="ico"><use href="#dotsv"/></svg></button>
    <button class="plain d-flex" aria-label="Ebenen"><svg class="ico"><use href="#layersfill"/></svg></button>
  </div>
  <div class="d-flex flex-grow-1">
    <div class="aside-body flex-grow-1">
      <button class="plain fold fold-open d-flex align-items-center w-100"><svg class="ico"><use href="#up"/></svg>Allgemein</button>
      <div class="fields">
        <div class="valid d-flex flex-column align-items-start">
          <h3>Gültig für</h3>
          <div class="chips d-flex flex-column align-items-start">
            <span class="chip d-flex align-items-center"><svg class="ico"><use href="#region"/></svg>regionenübegreifend</span>
            <span class="chip d-flex align-items-center"><svg class="ico"><use href="#legal"/></svg>rechtliche Einheiten-übergreifend</span>
            <span class="chip d-flex align-items-center"><svg class="ico"><use href="#office"/></svg>standortübergreifend</span>
          </div>
        </div>
        <dl class="m-0">
          <div class="field"><dt>Kurzbezeichnung</dt><dd class="ps-1">-</dd></div>
          <div class="field"><dt>Bezeichnung</dt><dd>Kreditvergabe</dd></div>
          <div class="field tall"><dt>Beschreibung</dt><dd>Der Kreditvergabeprozess beschreibt die strukturierte und&nbsp;regelkonforme Abwicklung von Kreditanfragen – von der&nbsp;Erfassung über die Bonitätsprüfung und Entscheidung gemäß Kreditrichtlinie bis zur Auszahlung. Ziel ist eine...</dd></div>
          <div class="field"><dt>Varianten</dt><dd class="ps-1">-</dd></div>
          <div class="field final"><dt>Master</dt><dd class="ps-1">-</dd></div>
        </dl>
      </div>
      <button class="plain fold d-flex align-items-center w-100"><svg class="ico"><use href="#down"/></svg>Verantwortlichkeiten</button>
      <button class="plain fold d-flex align-items-center w-100"><svg class="ico"><use href="#down"/></svg>Inputs/Outputs</button>
      <button class="plain fold d-flex align-items-center w-100"><svg class="ico"><use href="#down"/></svg>IT-Systeme</button>
      <button class="plain fold d-flex align-items-center w-100"><svg class="ico"><use href="#down"/></svg>Dokumente</button>
      <button class="plain fold d-flex align-items-center w-100"><svg class="ico"><use href="#down"/></svg>Ziele</button>
      <button class="plain fold d-flex align-items-center w-100"><svg class="ico"><use href="#down"/></svg>Kennzahlen</button>
      <button class="plain fold d-flex align-items-center w-100"><svg class="ico"><use href="#down"/></svg>Prozessreifegrad</button>
    </div>
    <nav class="rail flex-shrink-0" aria-label="Abschnitte">
      <div class="rail-list d-flex flex-column">
        <a href="#" class="d-flex flex-fill align-items-center justify-content-center" aria-label="Info"><svg class="ico"><use href="#info"/></svg></a>
        <a href="#" class="d-flex flex-fill align-items-center justify-content-center" aria-label="Personen"><svg class="ico ico-wide"><use href="#users"/></svg></a>
        <a href="#" class="d-flex flex-fill align-items-center justify-content-center" aria-label="Austausch"><svg class="ico"><use href="#exchange"/></svg></a>
        <a href="#" class="d-flex flex-fill align-items-center justify-content-center" aria-label="Systeme"><svg class="ico"><use href="#db"/></svg></a>
        <a href="#" class="d-flex flex-fill align-items-center justify-content-center" aria-label="Dokumente"><svg class="ico"><use href="#doc"/></svg></a>
        <a href="#" class="d-flex flex-fill align-items-center justify-content-center" aria-label="Ziele"><svg class="ico"><use href="#target"/></svg></a>
        <a href="#" class="d-flex flex-fill align-items-center justify-content-center" aria-label="Ampel"><svg class="ico"><use href="#traffic"/></svg></a>
        <a href="#" class="d-flex flex-fill align-items-center justify-content-center" aria-label="Kennzahlen"><svg class="ico"><use href="#trend"/></svg></a>
        <a href="#" class="d-flex flex-fill align-items-center justify-content-center" aria-label="Normen"><svg class="ico"><use href="#books"/></svg></a>
        <a href="#" class="d-flex flex-fill align-items-center justify-content-center" aria-label="Risiken"><svg class="ico"><use href="#warn"/></svg></a>
        <a href="#" class="d-flex flex-fill align-items-center justify-content-center" aria-label="Kontrollen"><svg class="ico"><use href="#shield"/></svg></a>
        <a href="#" class="d-flex flex-fill align-items-center justify-content-center" aria-label="Audit"><svg class="ico"><use href="#spy"/></svg></a>
        <a href="#" class="d-flex flex-fill align-items-center justify-content-center" aria-label="Weg"><svg class="ico"><use href="#road"/></svg></a>
        <a href="#" class="d-flex flex-fill align-items-center justify-content-center" aria-label="Liste"><svg class="ico"><use href="#list"/></svg></a>
        <a href="#" class="d-flex flex-fill align-items-center justify-content-center" aria-label="Details"><svg class="ico"><use href="#zoomin"/></svg></a>
        <a href="#" class="d-flex flex-fill align-items-center justify-content-center" aria-label="Kosten"><svg class="ico"><use href="#calc"/></svg></a>
        <a href="#" class="d-flex flex-fill align-items-center justify-content-center" aria-label="Ideen"><svg class="ico"><use href="#bulb"/></svg></a>
        <a href="#" class="d-flex flex-fill align-items-center justify-content-center" aria-label="Rechner"><svg class="ico"><use href="#abacus"/></svg></a>
      </div>
    </nav>
  </div>
</aside>
</div>
</div>
<script src="https://cdn.jsdelivr.net/npm/bootstrap@5.3.0/dist/js/bootstrap.bundle.min.js"></script>
</body>
</html>
